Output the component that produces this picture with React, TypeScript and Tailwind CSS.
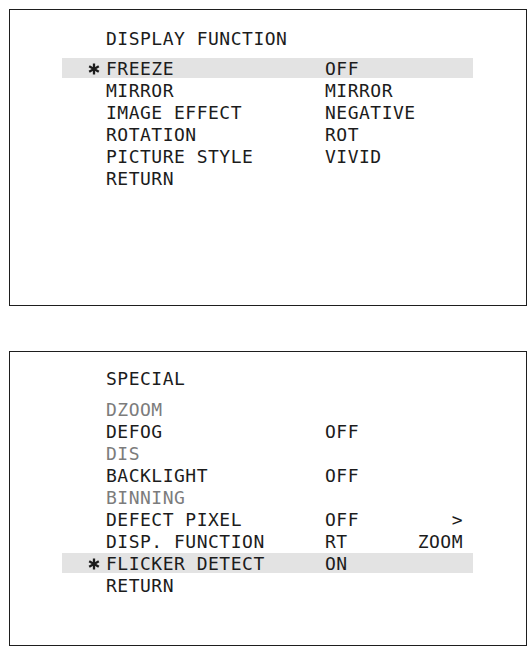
import React from "react"

type Row = {
  label: string
  value?: string
  extra?: string
  selected?: boolean
  disabled?: boolean
}

const displayRows: Row[] = [
  { label: "FREEZE", value: "OFF", selected: true },
  { label: "MIRROR", value: "MIRROR" },
  { label: "IMAGE EFFECT", value: "NEGATIVE" },
  { label: "ROTATION", value: "ROT" },
  { label: "PICTURE STYLE", value: "VIVID" },
  { label: "RETURN" },
]

const specialRows: Row[] = [
  { label: "DZOOM", disabled: true },
  { label: "DEFOG", value: "OFF" },
  { label: "DIS", disabled: true },
  { label: "BACKLIGHT", value: "OFF" },
  { label: "BINNING", disabled: true },
  { label: "DEFECT PIXEL", value: "OFF", extra: ">" },
  { label: "DISP. FUNCTION", value: "RT", extra: "ZOOM" },
  { label: "FLICKER DETECT", value: "ON", selected: true },
  { label: "RETURN" },
]

function Star() {
  return (
    <svg width="12" height="12" viewBox="0 0 12 12" className="mt-[5px]">
      <g stroke="#1c1c1c" strokeWidth="2.3" strokeLinecap="butt">
        <line x1="6" y1="0.5" x2="6" y2="11.5" />
        <line x1="1.2" y1="3.2" x2="10.8" y2="8.8" />
        <line x1="1.2" y1="8.8" x2="10.8" y2="3.2" />
      </g>
    </svg>
  )
}

function MenuRow({ row }: { row: Row }) {
  return (
    <div
      className={
        "grid grid-cols-[44px_219px_92px_46px] h-[22px] pb-[2px] bg-clip-content " +
        (row.selected ? "bg-[#e3e3e3]" : "bg-transparent")
      }
    >
      <div className="pl-[26px]">{row.selected && <Star />}</div>
      <div className={row.disabled ? "text-[#7c7c7c]" : ""}>{row.label}</div>
      <div>{row.value}</div>
      <div className="text-right">{row.extra}</div>
    </div>
  )
}

function Panel({ title, rows, height, top, gap }: { title: string; rows: Row[]; height: string; top: string; gap: string }) {
  return (
    <div className={"border-[1.5px] border-[#1e1e1e] bg-white " + height}>
      <div className={"pl-[96px] h-[22px] " + top}>{title}</div>
      <div className={"ml-[52px] w-[411px] " + gap}>
        {rows.map((r, i) => (
          <MenuRow key={i} row={r} />
        ))}
      </div>
    </div>
  )
}

export default function App() {
  return (
    <main
      className="bg-white w-[532px] min-h-[654px] pt-[9px] pl-[9px] pr-[5px] text-[18px] leading-[22px] tracking-[0.5px] text-[#1c1c1c]"
      style={{ fontFamily: '"DejaVu Sans Mono", "Liberation Mono", monospace' }}
    >
      <Panel title="DISPLAY FUNCTION" rows={displayRows} height="h-[297px]" top="mt-[17.5px]" gap="mt-[8px]" />
      <div className="h-[45px]" />
      <Panel title="SPECIAL" rows={specialRows} height="h-[295px]" top="mt-[15.5px]" gap="mt-[9px]" />
    </main>
  )
}
